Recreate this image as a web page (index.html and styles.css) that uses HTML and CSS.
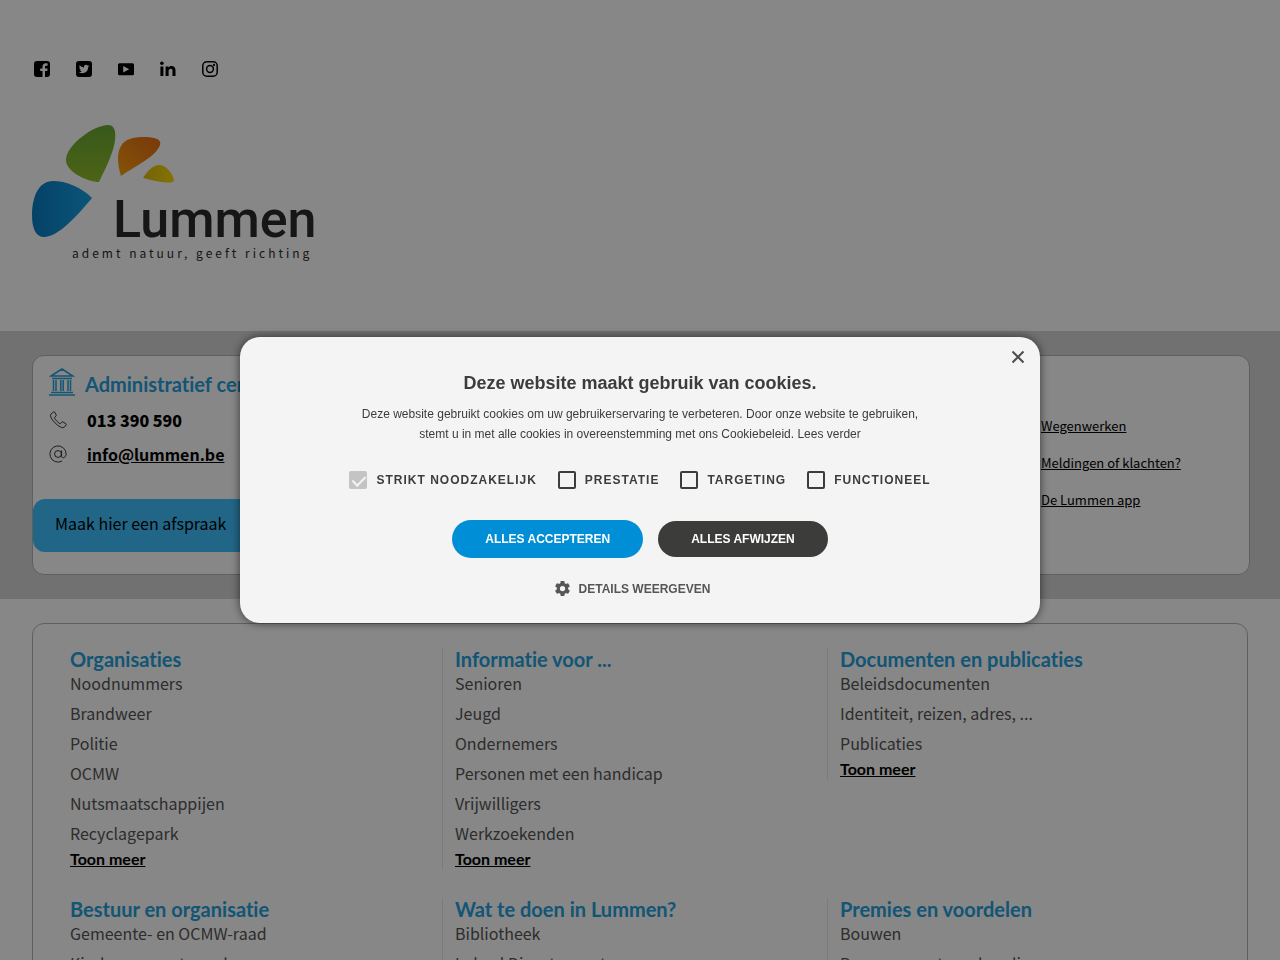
FILE: index.html
```html
<!DOCTYPE html>
<html lang="nl">
<head>
  <meta charset="UTF-8" />
  <meta name="viewport" content="width=device-width, initial-scale=1" />
  <title>Gemeente Lummen</title>
  <link rel="stylesheet" href="styles.css">
</head>
<body>
  <header class="header">
    <nav class="social" aria-label="Sociale media">
      <a href="#" aria-label="Facebook">
        <svg viewBox="0 0 16 16"><path fill-rule="evenodd" d="M3 0h10a3 3 0 0 1 3 3v10a3 3 0 0 1-3 3h-2V10h2.2l.4-2.5H11V6c0-.8.4-1.300 1.300-1.300h1.300V2.500C13.200 2.400 12.500 2.300 11.800 2.300 9.800 2.300 8.500 3.500 8.500 5.700v1.800H6.200V10h2.300v6H3a3 3 0 0 1-3-3V3a3 3 0 0 1 3-3z"/></svg>
      </a>
      <a href="#" aria-label="Twitter">
        <svg viewBox="0 0 16 16"><path fill-rule="evenodd" d="M3 0h10a3 3 0 0 1 3 3v10a3 3 0 0 1-3 3H3a3 3 0 0 1-3-3V3a3 3 0 0 1 3-3zm10.200 4.800-1.200.3.900-1.100-1.300.5a2.100 2.100 0 0 0-3.600 1.900A6 6 0 0 1 3.600 4.200a2.100 2.100 0 0 0 .7 2.800l-1-.3c0 1 .7 1.900 1.700 2.100l-1 .1c.3.800 1 1.400 2 1.400A4.200 4.200 0 0 1 2.800 11.200C7 13.800 12.200 11.300 12.200 6z"/></svg>
      </a>
      <a href="#" aria-label="YouTube">
        <svg viewBox="0 0 16 16"><path fill-rule="evenodd" d="M1.500 2.200h13A1.500 1.500 0 0 1 16 3.700v9a1.500 1.500 0 0 1-1.500 1.500h-13A1.500 1.500 0 0 1 0 12.700v-9a1.500 1.500 0 0 1 1.500-1.500zM5.200 5v6.400l6-3.200z"/></svg>
      </a>
      <a href="#" aria-label="LinkedIn">
        <svg viewBox="0 0 16 16"><circle cx="1.900" cy="2.200" r="1.800"/><path d="M.4 5.400h3V15h-3zM5.600 5.400h2.900v1.300c.6-1 1.600-1.600 3-1.600 2.800 0 4 1.600 4 4.400V15h-3V10c0-1.500-.5-2.300-1.800-2.300-1.400 0-2.100 1-2.100 2.500V15h-3z"/></svg>
      </a>
      <a href="#" aria-label="Instagram">
        <svg viewBox="0 0 16 16" class="line"><rect x=".8" y=".8" width="14.400" height="14.400" rx="4"/><circle cx="8" cy="8" r="3.400"/><circle cx="12" cy="4" r=".4"/></svg>
      </a>
    </nav>
    <a href="#" class="logo" aria-label="Lummen, ademt natuur, geeft richting">
      <svg viewBox="0 0 282 140">
        <defs>
          <linearGradient id="blue"><stop offset="0" stop-color="#0b7cc4"/><stop offset="1" stop-color="#15a2e4"/></linearGradient>
          <linearGradient id="green" x2="0" y2="1"><stop offset="0" stop-color="#6aa833"/><stop offset="1" stop-color="#92bc2b"/></linearGradient>
          <linearGradient id="orange" x1="0" y1="1" x2="1" y2="0"><stop offset="0" stop-color="#f8a010"/><stop offset="1" stop-color="#e66a14"/></linearGradient>
          <linearGradient id="yellow"><stop offset="0" stop-color="#d8bc10"/><stop offset="1" stop-color="#ffd805"/></linearGradient>
        </defs>
        <path fill="url(#blue)" d="M60 74C49 63 34 57 21 57 7 57 0 72 0 91c0 14 4 22 12 22 14 0 33-21 48-39z"/>
        <path fill="url(#green)" d="M67 58C56 58 34 48 34 36 34 21 62 1 76 1c11 0 8 19 2 33-3 8-8 17-11 24z"/>
        <path fill="url(#orange)" d="M89 52C86 42 84 30 89 22c4-7 12-9 23-9 10 0 18 2 16 8-4 12-25 21-39 31z"/>
        <path fill="url(#yellow)" d="M111 54c4-6 9-13 17-13 6 0 13 9 14 15 0 6-23 0-31-2z"/>
        <text class="logo-name" x="81" y="113">Lummen</text>
        <text class="logo-tag" x="40" y="134">ademt natuur, geeft richting</text>
      </svg>
    </a>
  </header>

  <section class="contact">
    <div class="contact-card">
      <div class="contact-main">
        <h2 class="contact-title">
          <svg viewBox="0 0 26 28"><path d="M2 8 13 1l11 7zM3 10.500h20M4.500 12v11M7 12v11M11.800 12v11M14.200 12v11M19 12v11M21.500 12v11M2 24.500h22M0 27h26"/></svg>
          Administratief centrum
        </h2>
        <p class="contact-row">
          <svg viewBox="0 0 20 20"><path d="M5 1 2 3.500C-1 7 13 21.500 17 18l2-2.500c.4-.6.2-1-.3-1.400l-3.200-2c-.6-.3-1-.2-1.400.3l-1 1.400c-.5.500-1 .4-1.500 0-2.500-1.800-4-3.500-5.300-5.700-.3-.5-.3-1 .2-1.400l1.200-1c.4-.4.5-.8.2-1.300L6.300 1.200C6 .8 5.500.6 5 1z"/></svg>
          <strong>013 390 590</strong>
        </p>
        <p class="contact-row">
          <svg viewBox="0 0 20 20"><circle cx="10" cy="10" r="3.800"/><path d="M14 6v6.500c0 3 5 2 5-2.500a9 9 0 1 0-4.500 7.800"/></svg>
          <a href="#">info@lummen.be</a>
        </p>
        <a href="#" class="appointment">Maak hier een afspraak</a>
      </div>
      <ul class="contact-links">
        <li><a href="#">Wegenwerken</a></li>
        <li><a href="#">Meldingen of klachten?</a></li>
        <li><a href="#">De Lummen app</a></li>
      </ul>
    </div>
  </section>

  <main class="themes">
    <section class="theme">
      <h2>Organisaties</h2>
      <ul>
        <li>Noodnummers</li>
        <li>Brandweer</li>
        <li>Politie</li>
        <li>OCMW</li>
        <li>Nutsmaatschappijen</li>
        <li>Recyclagepark</li>
      </ul>
      <a href="#">Toon meer</a>
    </section>
    <section class="theme">
      <h2>Informatie voor ...</h2>
      <ul>
        <li>Senioren</li>
        <li>Jeugd</li>
        <li>Ondernemers</li>
        <li>Personen met een handicap</li>
        <li>Vrijwilligers</li>
        <li>Werkzoekenden</li>
      </ul>
      <a href="#">Toon meer</a>
    </section>
    <section class="theme">
      <h2>Documenten en publicaties</h2>
      <ul>
        <li>Beleidsdocumenten</li>
        <li>Identiteit, reizen, adres, ...</li>
        <li>Publicaties</li>
      </ul>
      <a href="#">Toon meer</a>
    </section>
    <section class="theme">
      <h2>Bestuur en organisatie</h2>
      <ul>
        <li>Gemeente- en OCMW-raad</li>
        <li>Kindergemeenteraad</li>
      </ul>
    </section>
    <section class="theme">
      <h2>Wat te doen in Lummen?</h2>
      <ul>
        <li>Bibliotheek</li>
        <li>Lokaal Dienstencentrum</li>
      </ul>
    </section>
    <section class="theme">
      <h2>Premies en voordelen</h2>
      <ul>
        <li>Bouwen</li>
        <li>Personen met een handicap</li>
      </ul>
    </section>
  </main>

  <!-- Cookie consent -->
  <div class="overlay">
    <div class="cookie" role="dialog" aria-labelledby="cookieTitle">
      <button class="cookie-close" aria-label="Sluiten">
        <svg viewBox="0 0 14 14"><path d="M1.500 1.500l11 11M12.500 1.500l-11 11"/></svg>
      </button>
      <h1 id="cookieTitle">Deze website maakt gebruik van cookies.</h1>
      <p class="cookie-text">Deze website gebruikt cookies om uw gebruikerservaring te verbeteren. Door onze website te gebruiken, stemt u in met alle cookies in overeenstemming met ons Cookiebeleid. <a href="#">Lees verder</a></p>
      <div class="cookie-options">
        <label><input type="checkbox" checked disabled> Strikt noodzakelijk</label>
        <label><input type="checkbox"> Prestatie</label>
        <label><input type="checkbox"> Targeting</label>
        <label><input type="checkbox"> Functioneel</label>
      </div>
      <div class="cookie-buttons">
        <button class="accept">Alles accepteren</button>
        <button class="decline">Alles afwijzen</button>
      </div>
      <button class="cookie-details">
        <svg viewBox="2 2 20 20"><path d="M19.430 12.980c.04-.320.070-.640.070-.980s-.03-.660-.07-.980l2.110-1.650c.19-.150.240-.420.120-.640l-2-3.460c-.12-.220-.390-.300-.610-.220l-2.490 1c-.52-.400-1.080-.730-1.690-.980l-.380-2.650C14.460 2.180 14.250 2 14 2h-4c-.25 0-.46.180-.49.420l-.380 2.650c-.61.250-1.170.590-1.690.980l-2.490-1c-.23-.09-.49 0-.61.220l-2 3.460c-.13.220-.07.490.12.640l2.110 1.650c-.04.320-.07.650-.07.980s.03.660.07.980l-2.110 1.650c-.19.150-.24.420-.12.640l2 3.460c.12.220.39.300.61.220l2.490-1c.52.400 1.080.730 1.690.980l.38 2.650c.03.240.24.420.49.420h4c.25 0 .46-.18.490-.42l.380-2.650c.61-.25 1.170-.59 1.690-.98l2.490 1c.23.09.49 0 .61-.22l2-3.460c.12-.22.07-.49-.12-.64zM12 15.500a3.500 3.500 0 1 1 0-7 3.500 3.500 0 0 1 0 7z"/></svg>
        Details weergeven
      </button>
    </div>
  </div>
</body>
</html>
```
FILE: styles.css
```css
* {
  box-sizing: border-box;
}
body {
  margin: 0;
  height: 100vh;
  overflow: hidden;
  background: #fff;
  color: #000;
  font-family: "Noto Sans CJK JP", "Noto Sans CJK SC", sans-serif;
  font-variant-ligatures: none;
}
h1, h2, p, ul {
  margin: 0;
  padding: 0;
}
ul {
  list-style: none;
}
a {
  color: inherit;
}

/* Header */
.header {
  padding: 60px 32px 67px;
}
.social {
  display: flex;
  gap: 26px;
  padding: 1px 2px 0;
}
.social svg {
  display: block;
  width: 16px;
  height: 16px;
}
.social .line {
  fill: none;
  stroke: #000;
  stroke-width: 1.5;
}
.logo {
  display: block;
  width: 282px;
  margin-top: 47px;
}
.logo svg {
  display: block;
  overflow: visible;
}
.logo-name {
  font-family: Roboto, sans-serif;
  font-size: 52px;
  font-weight: 500;
  fill: #2b2b2a;
}
.logo-tag {
  font-size: 12px;
  letter-spacing: 3px;
  fill: #2b2b2a;
}

/* Contact */
.contact {
  padding: 24px 30px 24px 32px;
  background: #d5d5d5;
}
.contact-card {
  display: flex;
  gap: 20px;
  border: 1px solid #b4b4b4;
  border-radius: 12px;
  background: #fff;
}
.contact-main {
  flex: 1;
  padding: 12px 0 22px;
}
.contact-title {
  display: flex;
  align-items: center;
  gap: 10px;
  height: 32px;
  margin-bottom: 3px;
  padding-left: 16px;
  font-family: Lato, sans-serif;
  font-size: 20px;
  color: #23a0dc;
}
.contact-title svg {
  width: 26px;
  height: 28px;
  margin-top: -4px;
  fill: none;
  stroke: #23a0dc;
  stroke-width: 1.5;
}
.contact-row {
  display: flex;
  align-items: center;
  gap: 20px;
  height: 34px;
  padding-left: 16px;
  font-size: 16px;
  font-weight: bold;
  line-height: 34px;
}
.contact-row svg {
  width: 18px;
  height: 18px;
  fill: none;
  stroke: #222;
}
.appointment {
  display: block;
  margin-top: 28px;
  padding: 0 22px 5px;
  border-radius: 12px;
  background: #41c0ff;
  font-size: 16px;
  line-height: 48px;
  text-decoration: none;
}
.contact-links {
  width: 208px;
  padding-top: 51px;
  font-size: 13px;
  line-height: 37px;
}

/* Themes */
.themes {
  display: grid;
  grid-template-columns: repeat(3, 1fr);
  align-items: start;
  row-gap: 28px;
  margin: 24px 32px;
  padding: 24px 35px 24px 24px;
  border: 1px solid #b4b4b4;
  border-radius: 12px;
}
.theme {
  padding-left: 12px;
  border-left: 1px solid #e8e8e8;
}
.theme:nth-child(3n + 1) {
  border-color: transparent;
}
.theme h2 {
  padding-bottom: 1px;
  font-family: Lato, sans-serif;
  font-size: 20px;
  line-height: 22px;
  color: #23a0dc;
}
.theme ul {
  display: flex;
  flex-direction: column;
  gap: 6px;
  font-size: 16px;
  line-height: 24px;
  color: #555;
}
.theme a {
  display: block;
  padding-top: 3px;
  font-family: Lato, sans-serif;
  font-size: 16px;
  font-weight: bold;
  line-height: 22px;
}

/* Cookie consent */
.overlay {
  position: fixed;
  inset: 0;
  display: flex;
  align-items: center;
  justify-content: center;
  background: rgba(0, 0, 0, 0.47);
}
.cookie {
  position: relative;
  display: flex;
  flex-direction: column;
  align-items: center;
  width: 800px;
  max-width: 90%;
  padding: 34px 30px 27px;
  border-radius: 20px;
  background: #f4f4f4;
  box-shadow: 0 0 10px rgba(0, 0, 0, 0.6);
  color: #3c3c3b;
  font-family: "Liberation Sans", Arial, sans-serif;
  text-align: center;
}
.cookie h1 {
  font-size: 18px;
  line-height: 24px;
}
.cookie-text {
  max-width: 580px;
  margin-top: 9px;
  font-size: 12px;
  line-height: 20px;
}
.cookie-text a {
  text-decoration: none;
}
.cookie button {
  border: none;
  font-family: inherit;
  font-size: 12px;
  font-weight: bold;
  text-transform: uppercase;
  cursor: pointer;
}
.cookie .cookie-close {
  position: absolute;
  top: 13px;
  right: 15px;
  padding: 0;
  background: none;
}
.cookie-close svg {
  display: block;
  width: 14px;
  height: 14px;
  stroke: #4d4d4d;
  stroke-width: 2;
}
.cookie-options {
  display: flex;
  gap: 21px;
  margin-top: 27px;
  font-size: 12px;
  font-weight: bold;
  letter-spacing: 1px;
  text-transform: uppercase;
}
.cookie-options label {
  display: flex;
  align-items: center;
  gap: 9px;
}
.cookie-options input {
  appearance: none;
  width: 18px;
  height: 18px;
  margin: 0;
  border: 2px solid #3c3c3b;
  border-radius: 2px;
}
.cookie-options input:checked {
  border-color: #c4c4c4;
  background: #c4c4c4;
}
.cookie-options input:checked::before {
  content: "";
  display: block;
  width: 6px;
  height: 11px;
  margin: 0 0 0 4px;
  border: solid #f4f4f4;
  border-width: 0 2px 2px 0;
  transform: rotate(45deg);
}
.cookie-buttons {
  display: flex;
  align-items: center;
  gap: 15px;
  margin-top: 31px;
}
.cookie-buttons button {
  padding: 0 33px;
  border-radius: 20px;
  color: #fff;
  line-height: 36px;
}
.cookie-buttons .accept {
  background: #008fd7;
  line-height: 38px;
}
.cookie-buttons .decline {
  background: #3c3c3b;
}
.cookie .cookie-details {
  display: flex;
  align-items: center;
  gap: 9px;
  margin-top: 23px;
  padding: 0 15px 0 0;
  background: none;
  color: #565656;
}
.cookie-details svg {
  width: 15px;
  height: 15px;
  fill: #565656;
}
```
